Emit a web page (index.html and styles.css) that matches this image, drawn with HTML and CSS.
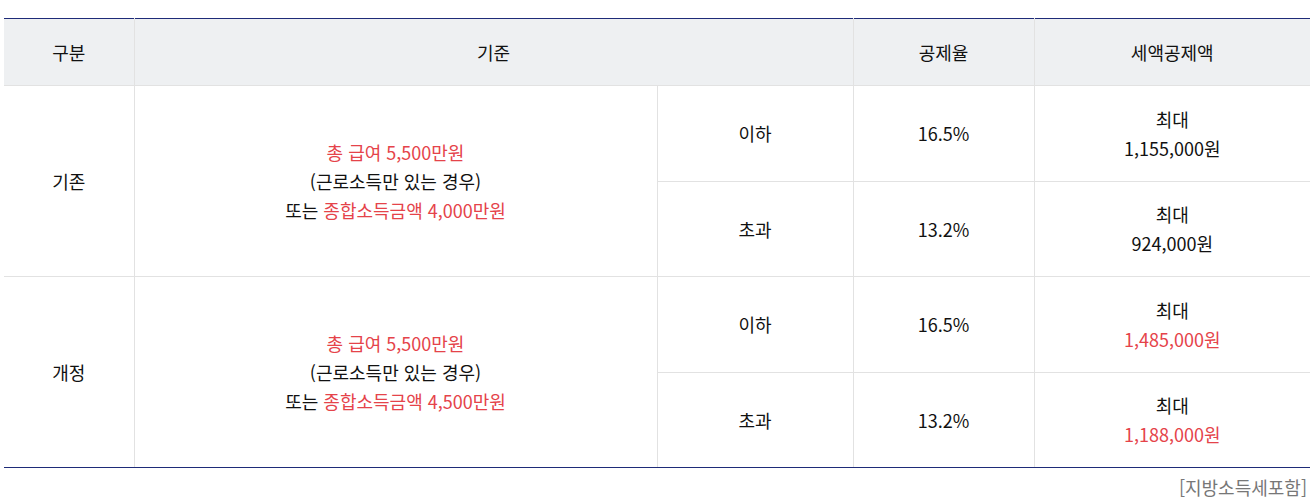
FILE: index.html
```html
<!DOCTYPE html>
<html lang="ko">
<head>
<meta charset="utf-8">
<link rel="stylesheet" href="styles.css">
</head>
<body>
<div class="wrap">
  <table class="tax">
    <colgroup>
      <col class="c1"><col class="c2"><col class="c3"><col class="c4"><col class="c5">
    </colgroup>
    <thead>
      <tr>
        <th class="first">구분</th>
        <th colspan="2">기준</th>
        <th>공제율</th>
        <th>세액공제액</th>
      </tr>
    </thead>
    <tbody>
      <tr class="r-a">
        <td rowspan="2" class="first">기존</td>
        <td rowspan="2"><span class="red">총 급여 5,500만원</span><br>(근로소득만 있는 경우)<br>또는 <span class="red">종합소득금액 4,000만원</span></td>
        <td>이하</td>
        <td>16.5%</td>
        <td>최대<br>1,155,000원</td>
      </tr>
      <tr class="r-b">
        <td>초과</td>
        <td>13.2%</td>
        <td>최대<br>924,000원</td>
      </tr>
      <tr class="r-a">
        <td rowspan="2" class="first end">개정</td>
        <td rowspan="2" class="end"><span class="red">총 급여 5,500만원</span><br>(근로소득만 있는 경우)<br>또는 <span class="red">종합소득금액 4,500만원</span></td>
        <td>이하</td>
        <td>16.5%</td>
        <td>최대<br><span class="red">1,485,000원</span></td>
      </tr>
      <tr class="r-b">
        <td class="end">초과</td>
        <td class="end">13.2%</td>
        <td class="end">최대<br><span class="red">1,188,000원</span></td>
      </tr>
    </tbody>
  </table>
  <p class="note">[지방소득세포함]</p>
</div>
</body>
</html>
```

FILE: styles.css
```css
html, body {
  margin: 0;
  padding: 0;
  background: #fff;
}
body {
  font-family: "Noto Sans CJK KR", "Noto Sans", sans-serif;
  color: #111;
}
.wrap {
  padding: 18px 5px 0 4px;
}
.tax {
  width: 1306px;
  border-collapse: collapse;
  table-layout: fixed;
  border-top: 1px solid #1e2b78;
  border-bottom: 1px solid #1e2b78;
  font-size: 18px;
  line-height: 29px;
}
.c1 { width: 130px; }
.c2 { width: 523px; }
.c3 { width: 196px; }
.c4 { width: 181px; }
.c5 { width: 276px; }
.tax th {
  background: #eef0f2;
  font-weight: normal;
  height: 66px;
  padding: 0;
  border-left: 1px solid #e2e2e2;
  border-bottom: 1px solid #e2e2e2;
  text-align: center;
  vertical-align: middle;
}
.tax td {
  padding: 0;
  text-align: center;
  vertical-align: middle;
  border-left: 1px solid #e2e2e2;
  border-bottom: 1px solid #e2e2e2;
}
.r-a td { height: 95px; }
.r-b td { height: 94px; }
.tax .first {
  border-left: none;
}
.tax .end {
  border-bottom: 1px solid #1e2b78;
}
.red {
  color: #e5434a;
}
.note {
  margin: 7px 3px 0 0;
  text-align: right;
  font-size: 18px;
  line-height: 24px;
  color: #777;
}
```
